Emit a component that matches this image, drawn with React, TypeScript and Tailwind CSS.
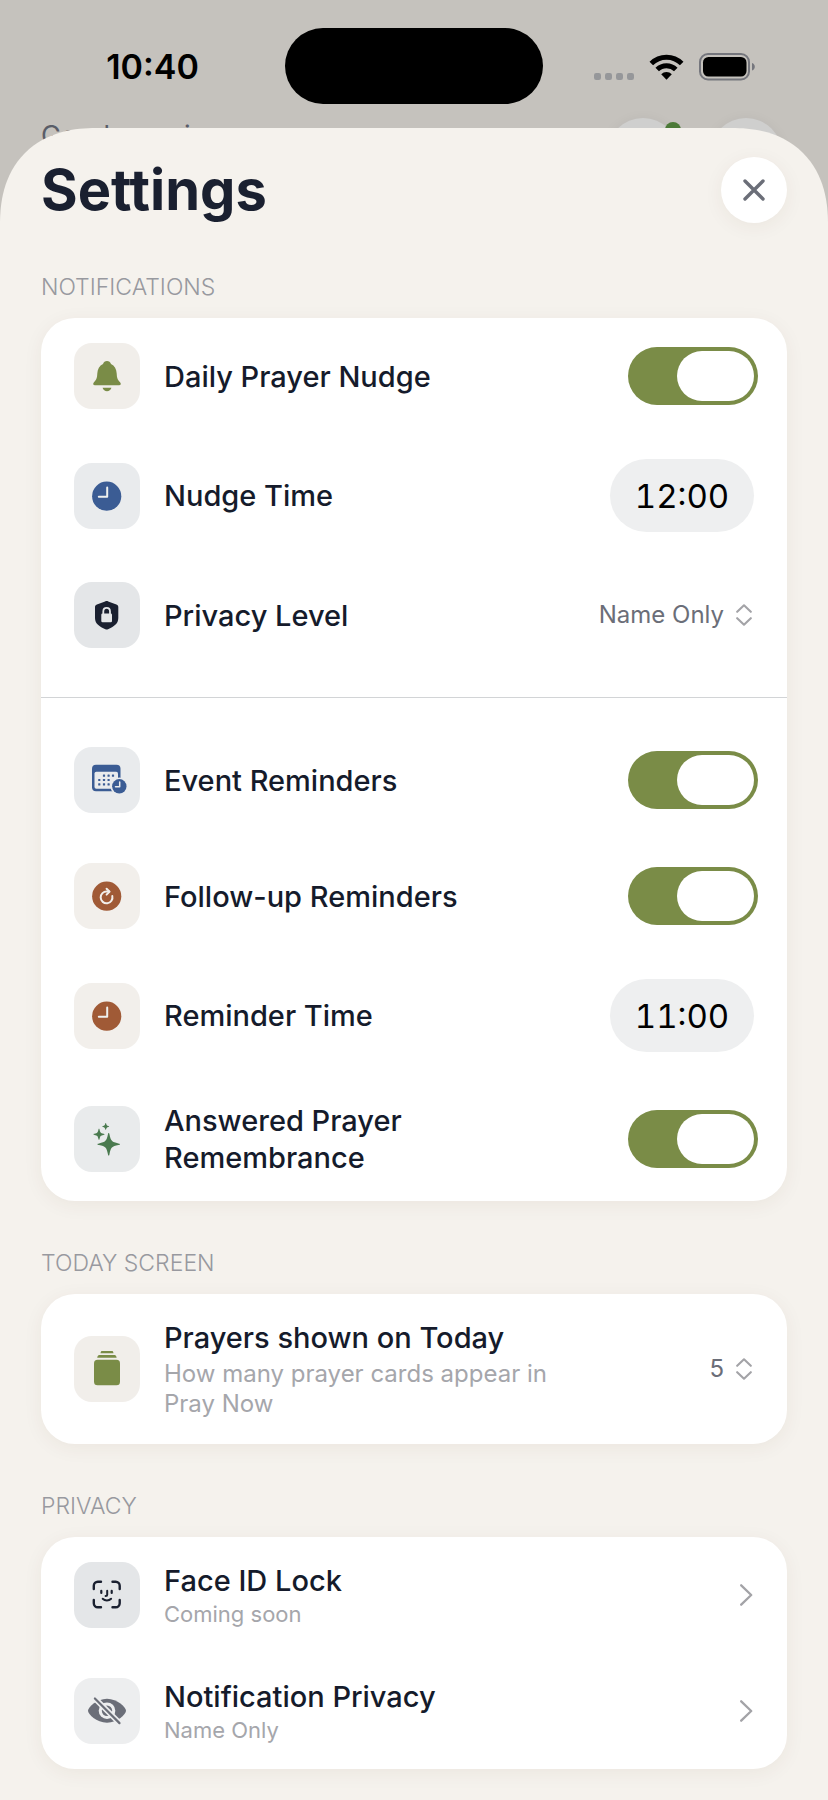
import React, { useState } from 'react';

type IconProps = { children: React.ReactNode; tile: string };

const IconTile = ({ children, tile }: IconProps) => (
  <div className={`size-[66px] shrink-0 rounded-[18px] ${tile}`}>
    <svg viewBox="0 0 66 66" className="size-full" aria-hidden="true">
      {children}
    </svg>
  </div>
);

const BellIcon = () => (
  <IconTile tile="bg-[#f1eeea] text-[#7a8c47]">
    <path
      fill="currentColor"
      d="M33 18c-2 0-3.400 1.100-4 3C25.400 22.700 23.500 26.200 23.300 30.500c-.2 4.600-.8 6-3.200 8.600-1.500 1.500-1.100 3.200.9 3.200h24c2 0 2.400-1.700.9-3.200-2.400-2.600-3-4-3.200-8.600C42.500 26.200 40.600 22.700 37 21c-.6-1.900-2-3-4-3z"
    />
    <path fill="currentColor" d="M28.600 44.700h8.800c-.6 2.300-2.300 3.500-4.400 3.500s-3.800-1.200-4.400-3.500z" />
  </IconTile>
);

const ClockIcon = ({ tile }: { tile: string }) => (
  <IconTile tile={tile}>
    <circle cx="32.700" cy="33.200" r="14.600" fill="currentColor" />
    <path d="M33.200 24.500v9.300h-8.400" fill="none" stroke="#eef0ee" strokeWidth="2" strokeLinecap="round" strokeLinejoin="round" />
  </IconTile>
);

const ShieldIcon = () => (
  <IconTile tile="bg-[#e4e6e8] text-[#1a2030]">
    <path
      fill="currentColor"
      d="M32.700 19c.6 0 1 .2 1.500.4l8.200 3c1.300.5 1.900 1.200 1.900 2.600v11c0 6-4.500 8.500-10.300 11.300-.9.400-1.700.4-2.600 0C25.600 44.500 21 42 21 36V25c0-1.400.6-2.100 1.900-2.600l8.200-3c.5-.2 1-.4 1.600-.4z"
    />
    <rect x="27.300" y="31.500" width="10.700" height="8.700" rx="1.300" fill="#e4e6e8" />
    <path d="M29.300 32v-2.600c0-4.600 6.700-4.600 6.700 0V32" fill="none" stroke="#e4e6e8" strokeWidth="1.800" />
  </IconTile>
);

const calendarDots = [
  [30, 28.7], [34.6, 28.7], [39, 28.7],
  [25.3, 33], [30, 33], [34.6, 33],
  [25.3, 37.4], [30, 37.4], [34.6, 37.4],
];

const CalendarIcon = () => (
  <IconTile tile="bg-[#e9ebed] text-[#3b5c94]">
    <rect x="18" y="17.700" width="28.500" height="26.500" rx="4" fill="currentColor" />
    <rect x="20.500" y="24.800" width="23.500" height="17" rx="1.800" fill="#e9ebed" />
    {calendarDots.map(([x, y]) => (
      <rect key={`${x}-${y}`} x={x - 1.1} y={y - 1.1} width="2.200" height="2.200" rx=".5" fill="currentColor" />
    ))}
    <circle cx="45.300" cy="39.300" r="8.800" fill="#e9ebed" />
    <circle cx="45.300" cy="39.300" r="7.200" fill="currentColor" />
    <path d="M45.700 35v4.700h-4.200" fill="none" stroke="#e9ebed" strokeWidth="1.500" strokeLinecap="round" strokeLinejoin="round" />
  </IconTile>
);

const FollowUpIcon = () => (
  <IconTile tile="bg-[#f2efeb] text-[#a05a36]">
    <circle cx="32.700" cy="33.200" r="14.600" fill="currentColor" />
    <g fill="none" stroke="#f2efeb" strokeWidth="2" strokeLinecap="round" strokeLinejoin="round">
      <path d="M38.300 33a5.900 5.900 0 1 1-5.300-4.500h2" />
      <path d="M32.600 25.700l3 2.900-3 3" />
    </g>
  </IconTile>
);

const SparklesIcon = () => (
  <IconTile tile="bg-[#e9ebec] text-[#4a7a4f]">
    <g fill="currentColor">
      <path d="M34.700 27c.5 0 .6.600.8 1.600 1.400 6.600 2.300 7.400 8.900 8.900 1 .2 1.600.3 1.600.8s-.6.600-1.600.8c-6.600 1.500-7.500 2.400-8.900 8.900-.2 1-.3 1.600-.8 1.600s-.6-.6-.8-1.600c-1.400-6.500-2.300-7.400-8.900-8.900-1-.2-1.600-.3-1.600-.8s.6-.6 1.600-.8c6.600-1.500 7.500-2.300 8.900-8.900.2-1 .3-1.600.8-1.600z" />
      <path d="M25 22.800c.4 0 .5.500.6 1 .6 2.900 1 3.300 3.900 3.900.5.100 1 .2 1 .6s-.5.500-1 .6c-2.900.6-3.300 1-3.900 3.900-.1.500-.2 1-.6 1s-.5-.5-.6-1c-.6-2.900-1-3.300-3.900-3.900-.5-.1-1-.2-1-.6s.5-.5 1-.6c2.900-.6 3.300-1 3.900-3.900.1-.5.200-1 .6-1z" />
      <path d="M31.700 16.900c.3 0 .4.400.5.800.4 1.600.6 1.800 2.200 2.200.4.100.8.200.8.500s-.4.400-.8.500c-1.600.4-1.800.6-2.200 2.200-.1.400-.2.800-.5.800s-.4-.4-.5-.8c-.4-1.600-.6-1.800-2.200-2.200-.4-.1-.8-.2-.8-.5s.4-.4.800-.5c1.600-.4 1.800-.6 2.200-2.200.1-.4.200-.8.500-.8z" />
    </g>
  </IconTile>
);

const StackIcon = () => (
  <IconTile tile="bg-[#f1eeea] text-[#7a8c47]">
    <g fill="currentColor">
      <rect x="20" y="23.700" width="26" height="25.500" rx="3.500" />
      <path d="M25.200 19h15.400c1 0 1.700.9 2 2.800H23.200c.3-1.900 1-2.800 2-2.800z" />
      <path d="M28 15h10c.8 0 1.300.6 1.500 2.200h-13c.2-1.600.7-2.200 1.500-2.200z" />
    </g>
  </IconTile>
);

const FaceIdIcon = () => (
  <IconTile tile="bg-[#e4e6e8] text-[#1a2030]">
    <g fill="none" stroke="currentColor" strokeWidth="2.400" strokeLinecap="round" strokeLinejoin="round">
      <path d="M19.800 27v-3.200a4 4 0 0 1 4-4H27" />
      <path d="M38.500 19.800h3.200a4 4 0 0 1 4 4V27" />
      <path d="M45.700 38v3.300a4 4 0 0 1-4 4h-3.200" />
      <path d="M27 45.300h-3.200a4 4 0 0 1-4-4V38" />
      <path d="M27.300 28.800v2.200M37.700 28.800v2.200" strokeWidth="2.200" />
      <path d="M33.200 28.800v4c0 .9-.5 1.300-1.600 1.300" strokeWidth="2" />
      <path d="M28.700 36.800c2.300 2.300 6.100 2.300 8.400 0" strokeWidth="2" />
    </g>
  </IconTile>
);

const EyeSlashIcon = () => (
  <IconTile tile="bg-[#edeeef] text-[#6b6e78]">
    <path
      fill="currentColor"
      d="M33 20.700c10.500 0 19 8.800 19 12s-8.400 12-19 12-19-8.800-19-12 8.500-12 19-12z"
    />
    <circle cx="33" cy="32.700" r="8.300" fill="#edeeef" />
    <circle cx="33" cy="32.700" r="5.200" fill="currentColor" />
    <circle cx="33" cy="32.700" r="2" fill="#b9bbc0" />
    <path d="M20.700 20.300l25 25" stroke="#edeeef" strokeWidth="5.600" />
    <path d="M20.900 20.500l24.600 24.600" stroke="currentColor" strokeWidth="2.200" strokeLinecap="round" />
  </IconTile>
);

const UpDownIcon = () => (
  <svg viewBox="0 0 18 22" className="h-[22px] w-[18px]" fill="none" stroke="#a3a3a7" strokeWidth="2.100" strokeLinecap="round" strokeLinejoin="round" aria-hidden="true">
    <path d="M1.200 7.800L8 1.300l6.800 6.500M1.200 14.200L8 20.700l6.800-6.500" />
  </svg>
);

const ChevronIcon = () => (
  <svg viewBox="0 0 14 22" className="h-[22px] w-3.5 shrink-0" fill="none" stroke="#a3a3a7" strokeWidth="2.300" strokeLinecap="round" strokeLinejoin="round" aria-hidden="true">
    <path d="M1.200 1.300l10 9.700-10 9.700" />
  </svg>
);

const rowClass = 'flex w-full items-center gap-6 px-[33px] py-[25px] text-left';
const titleClass = 'block text-[29px] leading-[37px] font-medium text-[#151b2b]';

const ToggleRow = ({ id, icon, label }: { id: string; icon: React.ReactNode; label: string }) => {
  const [on, setOn] = useState(true);
  return (
    <div className={rowClass}>
      {icon}
      <label htmlFor={id} className={`${titleClass} max-w-[400px]`}>{label}</label>
      <input
        id={id}
        type="checkbox"
        role="switch"
        checked={on}
        onChange={() => setOn(!on)}
        className="-mr-1 ml-auto flex h-[58px] w-[130px] shrink-0 appearance-none rounded-full bg-[#d5d6d8] p-1 before:h-[50px] before:w-[77px] before:rounded-full before:bg-white checked:justify-end checked:bg-[#7a8c47]"
      />
    </div>
  );
};

const TimeRow = ({ id, icon, label, time }: { id: string; icon: React.ReactNode; label: string; time: string }) => (
  <div className={rowClass}>
    {icon}
    <label htmlFor={id} className={titleClass}>{label}</label>
    <input
      id={id}
      type="text"
      defaultValue={time}
      className="ml-auto h-[73px] w-36 shrink-0 rounded-full bg-[#eeeff0] text-center text-[33px] text-black tabular-nums"
    />
  </div>
);

type SelectRowProps = { id: string; icon: React.ReactNode; label: string; hint?: string; value: string; options: string[] };

const SelectRow = ({ id, icon, label, hint, value, options }: SelectRowProps) => (
  <div className={rowClass}>
    {icon}
    <div className="max-w-[400px]">
      <label htmlFor={id} className={titleClass}>{label}</label>
      {hint && <p className="mt-[3px] text-[24px] leading-[30px] text-[#a5a6ab]">{hint}</p>}
    </div>
    <div className="ml-auto flex shrink-0 items-center gap-3">
      <select id={id} defaultValue={value} className="field-sizing-content appearance-none bg-transparent text-[24px] leading-[30px] text-[#6b6e78]">
        {options.map(option => (
          <option key={option}>{option}</option>
        ))}
      </select>
      <UpDownIcon />
    </div>
  </div>
);

const LinkRow = ({ icon, label, hint }: { icon: React.ReactNode; label: string; hint: string }) => (
  <button type="button" className={rowClass}>
    {icon}
    <span>
      <span className={titleClass}>{label}</span>
      <span className="mt-0.5 block text-[22px] leading-[27px] text-[#a5a6ab]">{hint}</span>
    </span>
    <span className="ml-auto">
      <ChevronIcon />
    </span>
  </button>
);

const Section = ({ title, children }: { title: string; children: React.ReactNode }) => (
  <section>
    <h2 className="mb-[17px] text-[23px] leading-7 font-light text-[#98999f]">{title}</h2>
    <div className="rounded-[34px] bg-white shadow-[0_4px_20px_rgba(80,50,20,0.06)]">{children}</div>
  </section>
);

const StatusBar = () => (
  <div className="grid grid-cols-[1fr_258px_1fr] items-center pt-7">
    <div className="pl-5 text-center text-[34px] font-semibold text-black">10:40</div>
    <div className="h-[76px] rounded-full bg-black" />
    <div className="flex justify-center pr-6">
      <svg viewBox="0 -1 164 30" className="h-[30px] w-[164px]" aria-hidden="true">
        <g fill="#96979a">
          <rect x="2" y="21" width="7" height="7" rx="2.200" />
          <rect x="13" y="21" width="7" height="7" rx="2.200" />
          <rect x="24" y="21" width="7" height="7" rx="2.200" />
          <rect x="35" y="21" width="7" height="7" rx="2.200" />
        </g>
        <g fill="none" stroke="#000" strokeWidth="5">
          <path d="M59.300 11.500a21.500 21.500 0 0 1 30.400 0" />
          <path d="M65.200 17.600a13.200 13.200 0 0 1 18.600 0" />
        </g>
        <path d="M74.500 27.700l-5.300-5.400a7.500 7.500 0 0 1 10.600 0z" fill="#000" />
        <rect x="108" y="2" width="49" height="25.500" rx="8" fill="none" stroke="#75767d" strokeWidth="2" />
        <rect x="111" y="5" width="43.500" height="19.500" rx="5.500" fill="#000" />
        <path d="M160 11c1.800.6 2.800 2 2.800 3.800s-1 3.200-2.800 3.800z" fill="#75767d" />
      </svg>
    </div>
  </div>
);

export default function App() {
  return (
    <div className="flex min-h-screen flex-col bg-[#c5c2bd] font-['Inter',sans-serif]">
      <StatusBar />

      <div className="mt-3.5 flex h-[72px] items-start pr-[46px] pl-[41px] text-[27px] leading-[36px] text-[#5a5d68]">
        <p className="mr-auto">Good morning</p>
        <div className="relative mr-[31px] size-[72px] rounded-full bg-[#cfcfce] shadow-[0_2px_14px_rgba(0,0,0,0.06)]">
          <span className="absolute top-1 -right-0.5 size-4 rounded-full bg-[#4c7a38]" />
        </div>
        <div className="size-[72px] rounded-full bg-[#cfcfce] shadow-[0_2px_14px_rgba(0,0,0,0.06)]" />
      </div>

      <main className="relative -mt-[62px] grow rounded-t-[96px] bg-[#f5f2ed] px-[41px] pt-[29px] pb-8 [corner-shape:superellipse(1.2)]">
        <header className="mb-[50px] flex items-center justify-between">
          <h1 className="text-[56px] leading-[66px] font-bold text-[#1a2030]">Settings</h1>
          <button type="button" aria-label="Close" className="size-[66px] rounded-full bg-white shadow-[0_4px_20px_rgba(80,50,20,0.06)]">
            <svg viewBox="0 0 66 66" className="size-full" fill="none" stroke="#6b6e78" strokeWidth="3.400" strokeLinecap="round">
              <path d="M24 24l18 18M42 24l-18 18" />
            </svg>
          </button>
        </header>

        <div className="space-y-12">
          <Section title="NOTIFICATIONS">
            <ToggleRow id="daily-nudge" icon={<BellIcon />} label="Daily Prayer Nudge" />
            <TimeRow id="nudge-time" icon={<ClockIcon tile="bg-[#e9ebed] text-[#3b5c94]" />} label="Nudge Time" time="12:00" />
            <SelectRow id="privacy-level" icon={<ShieldIcon />} label="Privacy Level" value="Name Only" options={['Name Only']} />
            <hr className="my-6 border-t border-[#d2d4d6]" />
            <ToggleRow id="event-reminders" icon={<CalendarIcon />} label="Event Reminders" />
            <ToggleRow id="follow-up" icon={<FollowUpIcon />} label="Follow-up Reminders" />
            <TimeRow id="reminder-time" icon={<ClockIcon tile="bg-[#f2efeb] text-[#a05a36]" />} label="Reminder Time" time="11:00" />
            <ToggleRow id="answered" icon={<SparklesIcon />} label="Answered Prayer Remembrance" />
          </Section>

          <Section title="TODAY SCREEN">
            <SelectRow
              id="prayer-count"
              icon={<StackIcon />}
              label="Prayers shown on Today"
              hint="How many prayer cards appear in Pray Now"
              value="5"
              options={['3', '5', '7']}
            />
          </Section>

          <Section title="PRIVACY">
            <LinkRow icon={<FaceIdIcon />} label="Face ID Lock" hint="Coming soon" />
            <LinkRow icon={<EyeSlashIcon />} label="Notification Privacy" hint="Name Only" />
          </Section>
        </div>
      </main>
    </div>
  );
}
